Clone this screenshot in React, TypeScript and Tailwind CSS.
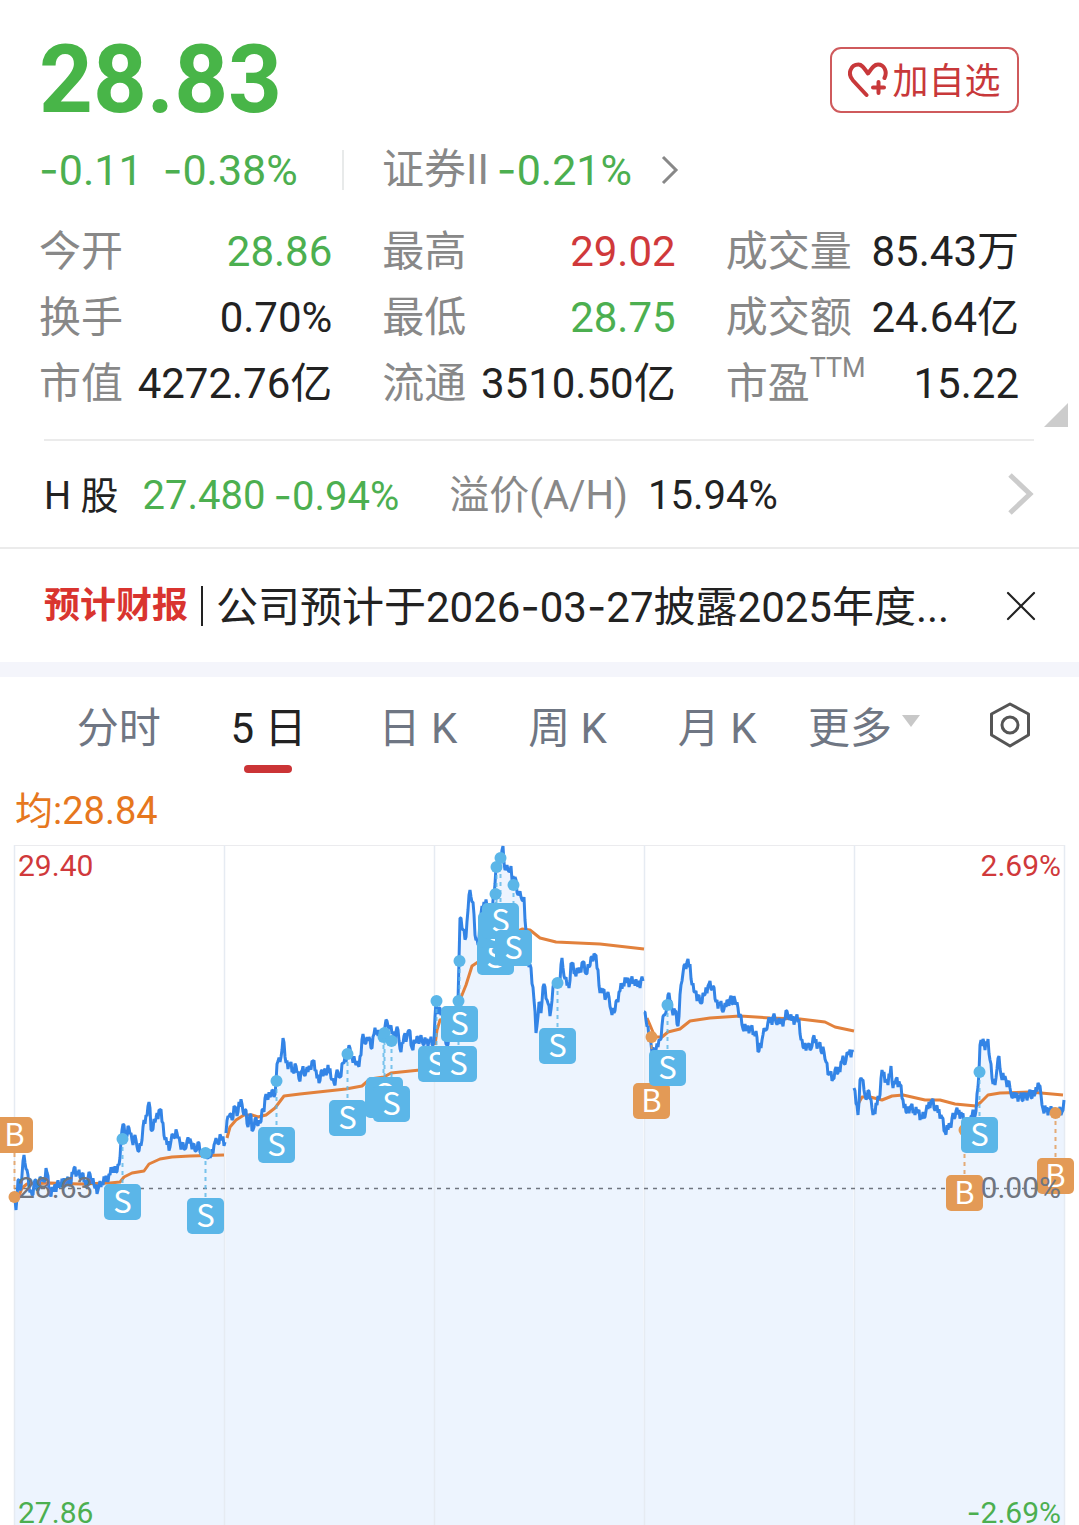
import { useState } from "react";
import { X } from "lucide-react";
import clsx from "clsx";

interface Quote {
  label: string;
  sup?: string;
  value: string;
  color: string;
}

interface Marker {
  type: "B" | "S";
  x: number;
  dotY: number;
  boxY: number;
}

const GREEN = "text-[#4caf50]";
const RED = "text-[#d0393b]";
const DARK = "text-[#222222]";

const quotes: Quote[] = [
  { label: "今开", value: "28.86", color: GREEN },
  { label: "最高", value: "29.02", color: RED },
  { label: "成交量", value: "85.43万", color: DARK },
  { label: "换手", value: "0.70%", color: DARK },
  { label: "最低", value: "28.75", color: GREEN },
  { label: "成交额", value: "24.64亿", color: DARK },
  { label: "市值", value: "4272.76亿", color: DARK },
  { label: "流通", value: "3510.50亿", color: DARK },
  { label: "市盈", sup: "TTM", value: "15.22", color: DARK },
];

const tabs = ["分时", "5 日", "日 K", "周 K", "月 K"];

// one polyline per trading day
const priceLines = [
  "14,1197 16,1210 18,1180 21,1188 24,1155 27,1170 29,1188 32,1195 35,1180 37,1190 41,1178 44,1182 46,1168 50,1194 54,1188 60,1184 66,1180 70,1184 74,1168 78,1175 82,1174 86,1186 90,1174 94,1185 98,1190 102,1182 107,1178 110,1175 113,1167 116,1172 119,1165 121,1140 123,1124 125,1136 129,1128 132,1140 136,1140 139,1151 142,1140 144,1120 147,1116 148,1106 150,1108 151,1130 156,1118 160,1110 163,1123 165,1140 170,1147 173,1135 177,1133 180,1143 184,1149 187,1141 191,1142 195,1151 198,1142 200,1152 204,1153 211,1156 214,1145 217,1142 221,1137 225,1142",
  "226,1133 228,1116 230,1114 232,1120 234,1106 237,1116 239,1102 242,1104 244,1115 246,1110 248,1127 251,1115 252,1131 255,1119 257,1124 260,1123 262,1110 264,1112 266,1094 270,1097 272,1090 274,1097 276,1082 277,1064 280,1062 283,1038 286,1063 290,1065 293,1071 296,1066 299,1079 302,1071 306,1072 310,1068 312,1061 316,1070 319,1083 322,1070 326,1075 328,1065 332,1080 334,1083 338,1072 340,1077 343,1063 347,1055 350,1048 352,1057 355,1062 358,1065 361,1055 363,1034 366,1043 369,1037 371,1048 374,1034 377,1030 380,1036 383,1036 387,1021 390,1027 394,1037 398,1030 401,1052 404,1036 407,1037 409,1030 412,1048 415,1042 418,1038 422,1041 430,1042 434,1041",
  "434,1041 436,1001 438,1014 440,1008 443,1015 444,1040 446,1044 455,1030 458,1001 459,960 460,918 463,930 466,937 468,910 470,890 473,902 475,935 478,945 480,920 484,902 488,905 492,915 494,895 496,867 499,858 501,860 503,846 505,870 508,870 511,866 512,880 516,880 518,895 521,897 524,897 525,920 527,950 529,967 531,968 534,1000 536,1033 539,1002 541,1013 543,987 545,987 547,1000 550,1016 553,987 556,983 560,981 562,958 565,979 569,988 571,963 575,973 580,970 583,962 585,972 589,967 592,957 595,955 598,970 600,993 603,990 606,997 609,997 611,1010 614,1013 617,1000 620,991 623,983 627,980 630,983 634,980 637,985 643,981",
  "644,1012 646,1020 650,1038 652,1053 656,1050 660,1040 664,1015 667,1005 669,993 672,1010 675,1011 678,1026 681,985 683,973 685,964 690,964 692,985 695,992 700,1002 704,995 708,986 713,986 716,1002 720,1005 724,1009 728,1001 735,1000 738,1008 742,1025 746,1029 750,1028 754,1033 756,1031 758,1052 762,1040 765,1030 768,1022 775,1018 778,1022 782,1022 785,1020 787,1011 790,1018 795,1020 799,1019 801,1040 803,1047 807,1045 810,1050 813,1038 818,1045 824,1052 826,1062 829,1074 833,1079 835,1070 838,1073 842,1061 846,1060 848,1053 853,1052",
  "854,1088 858,1115 860,1080 862,1080 864,1090 867,1098 869,1091 872,1108 875,1114 878,1096 880,1095 882,1070 886,1080 888,1085 891,1066 893,1088 896,1079 900,1085 903,1100 906,1112 910,1107 914,1111 918,1111 922,1119 926,1111 931,1101 936,1108 941,1115 945,1132 950,1125 956,1111 962,1115 966,1128 972,1116 976,1111 979,1072 980,1045 983,1039 985,1050 988,1039 990,1060 993,1084 996,1078 999,1056 1001,1075 1006,1080 1010,1088 1013,1097 1016,1095 1020,1098 1028,1095 1035,1094 1038,1083 1041,1095 1043,1109 1050,1111 1055,1112 1062,1112 1064,1100",
];

const averageLines = [
  "14,1197 19,1196 22,1188 27,1184 50,1183 80,1184 110,1183 120,1182 124,1177 132,1173 144,1171 149,1164 160,1159 172,1157 190,1156 224,1155",
  "227,1138 230,1127 236,1120 244,1115 252,1115 258,1117 266,1115 275,1108 284,1096 300,1094 346,1089 362,1086 370,1079 384,1077 391,1073 420,1070 434,1068",
  "435,1045 437,1030 440,1020 448,1018 455,1010 460,1000 466,985 472,966 478,962 495,955 510,935 522,929 530,930 540,938 556,942 600,944 644,949",
  "647,1018 650,1025 655,1037 662,1037 668,1032 680,1029 690,1021 710,1018 740,1016 770,1018 800,1019 825,1022 835,1027 854,1031",
  "857,1106 862,1097 870,1097 882,1100 892,1096 903,1095 925,1100 940,1100 955,1104 976,1106 981,1102 988,1095 1000,1093 1030,1092 1063,1095",
];

const markers: Marker[] = [
  { type: "B", x: 14, dotY: 1197, boxY: 1135 },
  { type: "S", x: 122, dotY: 1139, boxY: 1202 },
  { type: "S", x: 205, dotY: 1153, boxY: 1216 },
  { type: "S", x: 276, dotY: 1081, boxY: 1145 },
  { type: "S", x: 347, dotY: 1054, boxY: 1118 },
  { type: "S", x: 383, dotY: 1037, boxY: 1100 },
  { type: "S", x: 384, dotY: 1033, boxY: 1095 },
  { type: "S", x: 391, dotY: 1041, boxY: 1104 },
  { type: "S", x: 436, dotY: 1001, boxY: 1064 },
  { type: "S", x: 458, dotY: 1001, boxY: 1064 },
  { type: "S", x: 459, dotY: 961, boxY: 1024 },
  { type: "S", x: 495, dotY: 894, boxY: 957 },
  { type: "S", x: 496, dotY: 867, boxY: 930 },
  { type: "S", x: 500, dotY: 858, boxY: 921 },
  { type: "S", x: 513, dotY: 885, boxY: 948 },
  { type: "S", x: 557, dotY: 983, boxY: 1046 },
  { type: "B", x: 651, dotY: 1037, boxY: 1101 },
  { type: "S", x: 667, dotY: 1005, boxY: 1068 },
  { type: "B", x: 964, dotY: 1130, boxY: 1193 },
  { type: "S", x: 979, dotY: 1072, boxY: 1135 },
  { type: "B", x: 1055, dotY: 1113, boxY: 1176 },
];

const gridX = [14, 224, 434, 644, 854, 1064];

const wobble = [4, -4, 2, -3, 5, -2, -5, 3];

function withTicks(line: string) {
  const pts = line.split(" ").map((p) => p.split(",").map(Number));
  const out: string[] = [];
  let n = 0;
  for (let i = 0; i < pts.length - 1; i++) {
    const [x1, y1] = pts[i];
    const [x2, y2] = pts[i + 1];
    out.push(`${x1},${y1}`);
    const steps = Math.floor(x2 - x1);
    for (let s = 1; s < steps; s++) {
      const t = s / steps;
      n++;
      out.push(`${(x1 + (x2 - x1) * t).toFixed(1)},${(y1 + (y2 - y1) * t + wobble[n % 8]).toFixed(1)}`);
    }
  }
  out.push(pts[pts.length - 1].join(","));
  return out.join(" ");
}

// wide dash used in front of negative numbers and in dates
function Dash() {
  return <span className="font-[Inter,sans-serif]">-</span>;
}

function HeartPlus() {
  return (
    <svg className="h-9 w-10 shrink-0" viewBox="0 0 40 36" fill="none" stroke="#c8383a" strokeWidth="4" strokeLinecap="round" strokeLinejoin="round">
      <path d="M18.500 33 L5 18.500 C-1 12 2.500 2.500 10.500 2.500 C14 2.500 16 6 20 11.500 C24 6 26 2.500 30 2.500 C36.500 2.500 39.500 10 36.500 16" />
      <path d="M30.500 20 V31 M25 25.500 H36" />
    </svg>
  );
}

function PriceChart() {
  return (
    <svg className="block w-full" viewBox="0 840 1079 685" role="img" aria-label="5日走势">
      {priceLines.map((line, i) => (
        <polygon key={i} points={`${gridX[i]},1525 ${line} ${gridX[i + 1]},1525`} fill="#edf4fe" />
      ))}
      <path d="M14 845.500 H1065" stroke="#ebebee" strokeWidth="1" />
      {gridX.map((x) => (
        <path key={x} d={`M${x}.5 845 V1525`} stroke="#e6ebf2" strokeWidth="1.500" />
      ))}
      <path d="M14 1188.500 H1065" stroke="#70757f" strokeWidth="1.500" strokeDasharray="4 5" />
      {averageLines.map((line, i) => (
        <polyline key={i} points={line} fill="none" stroke="#e2813c" strokeWidth="3" strokeLinejoin="round" />
      ))}
      {priceLines.map((line, i) => (
        <polyline key={i} points={withTicks(line)} fill="none" stroke="#3384e6" strokeWidth="3" strokeLinejoin="bevel" />
      ))}
      {markers.map((m, i) => {
        const color = m.type === "B" ? "#e39a56" : "#5bb6e8";
        return (
          <g key={i}>
            <path d={`M${m.x + 0.5} ${m.dotY} V${m.boxY}`} stroke={color} strokeWidth="2" strokeDasharray="4 4" opacity="0.8" />
            <circle cx={m.x + 0.5} cy={m.dotY} r="6" fill={color} />
          </g>
        );
      })}
      {markers.map((m, i) => (
        <g key={i}>
          <rect x={m.x - 18} y={m.boxY - 18} width="37" height="36" rx="5" fill={m.type === "B" ? "#e39a56" : "#5bb6e8"} />
          <text x={m.x + 0.5} y={m.boxY + 11} textAnchor="middle" fill="#ffffff" className="font-['Noto_Sans_CJK_SC',sans-serif] text-[31px]">
            {m.type}
          </text>
        </g>
      ))}
      <g className="text-[30px]">
        <text x="18" y="876" fill="#d0393b">29.40</text>
        <text x="1061" y="876" textAnchor="end" fill="#d0393b">2.69%</text>
        <text x="18" y="1198" fill="#70757f">28.63</text>
        <text x="1061" y="1198" textAnchor="end" fill="#70757f">0.00%</text>
        <text x="18" y="1523" fill="#4caf50">27.86</text>
        <text x="1061" y="1523" textAnchor="end" fill="#4caf50">
          <tspan className="font-[Inter,sans-serif]">-</tspan>2.69%
        </text>
      </g>
    </svg>
  );
}

export default function App() {
  const [active, setActive] = useState("5 日");
  const [noticeOpen, setNoticeOpen] = useState(true);

  return (
    <div className="w-full overflow-hidden bg-white font-[Roboto,'Noto_Sans_CJK_SC',sans-serif] text-[42px] leading-none whitespace-nowrap text-[#222222]">
      <header className="relative pt-[22px] pr-[60px] pb-[22px] pl-[39px]">
        <div className="flex h-[115px] items-center justify-between">
          <span className="text-[94px] font-bold text-[#48b548]">28.83</span>
          <button className="flex h-[66px] w-[189px] items-center justify-center gap-1 rounded-[11px] border-2 border-[#cf5a5c] text-[36px] text-[#c8383a]">
            <HeartPlus />
            <span className="pt-1">加自选</span>
          </button>
        </div>

        <div className="flex h-[66px] items-center">
          <div className="flex w-[303px] gap-5 text-[43px] text-[#4caf50]">
            <span><Dash />0.11</span>
            <span><Dash />0.38%</span>
          </div>
          <div className="h-10 w-[2px] bg-[#e8eaea]" />
          <a href="#sector" className="ml-[38px] flex items-center">
            <span className="text-[#888888]">证券II</span>
            <span className="ml-2 text-[43px] text-[#4caf50]"><Dash />0.21%</span>
            <svg className="ml-7 h-8 w-5" viewBox="0 0 20 32" fill="none" stroke="#888888" strokeWidth="3">
              <path d="M3 3 L16 16 L3 29" />
            </svg>
          </a>
        </div>

        <dl className="mt-4 grid grid-cols-3 gap-x-[50px]">
          {quotes.map((q) => (
            <div key={q.label} className="flex h-[66px] items-center justify-between">
              <dt className="flex text-[#888888]">
                {q.label}
                {q.sup && <sup className="-top-2 text-[27px] leading-none">{q.sup}</sup>}
              </dt>
              <dd className={q.color}>{q.value}</dd>
            </div>
          ))}
        </dl>
        <svg className="absolute right-[11px] bottom-3 h-6 w-6" viewBox="0 0 24 24">
          <path d="M24 0 V24 H0 Z" fill="#cccccc" />
        </svg>
      </header>

      <a href="#h-share" className="mr-[45px] ml-11 flex h-[108px] items-center border-t-2 border-[#ebebeb] pt-1 text-[40px]">
        <span className="text-[38px]">H 股</span>
        <span className="ml-6 text-[#4caf50]">27.480</span>
        <span className="ml-2 text-[#4caf50]"><Dash />0.94%</span>
        <span className="ml-[50px] text-[#888888]">溢价(A/H)</span>
        <span className="ml-5">15.94%</span>
        <svg className="mb-1 ml-auto h-11 w-7" viewBox="0 0 28 44" fill="none" stroke="#cccccc" strokeWidth="5">
          <path d="M4 3 L24 22 L4 41" />
        </svg>
      </a>

      {noticeOpen && (
        <div className="flex h-[115px] items-center border-t-2 border-[#ebebeb] pr-10 pl-11">
          <span className="text-[36px] font-bold text-[#d9342f]">预计财报</span>
          <span className="mx-[13px] h-10 w-[2px] shrink-0 bg-[#222222]" />
          <p className="min-w-0 pt-1">
            公司预计于2026<Dash />03<Dash />27披露2025年度...
          </p>
          <button aria-label="关闭" className="ml-auto" onClick={() => setNoticeOpen(false)}>
            <X className="-m-2 h-[52px] w-[52px]" strokeWidth={1} color="#222222" />
          </button>
        </div>
      )}

      <div className="h-[15px] bg-[#f4f5fb]" />

      <nav className="flex h-[100px] items-center pr-[47px] pl-11 text-[#6f7683]">
        {tabs.map((tab) => (
          <button
            key={tab}
            onClick={() => setActive(tab)}
            className={clsx("relative h-full flex-1 pt-1", active === tab && "text-[#222222]")}
          >
            {tab}
            {active === tab && (
              <span className="absolute bottom-1 left-1/2 h-2 w-12 -translate-x-1/2 rounded-full bg-[#cb3436]" />
            )}
          </button>
        ))}
        <button className="ml-4 flex items-center gap-[10px] pt-1">
          更多
          <svg className="mb-4 h-3 w-[18px]" viewBox="0 0 18 12">
            <path d="M0 0 H18 L9 12 Z" fill="#c8c8c8" />
          </svg>
        </button>
        <button aria-label="设置" className="ml-[68px] pb-1">
          <svg className="h-12 w-[44px]" viewBox="0 0 44 48" fill="none" stroke="#555555" strokeWidth="3" strokeLinejoin="round">
            <path d="M22 3 L40.500 13 V34 L22 45 L3.500 34 V13 Z" />
            <circle cx="22" cy="24" r="8" />
          </svg>
        </button>
      </nav>

      <div className="flex h-[63px] items-center pt-1 pl-[15px] text-[38px] text-[#e6771e]">均:28.84</div>

      <PriceChart />
    </div>
  );
}
